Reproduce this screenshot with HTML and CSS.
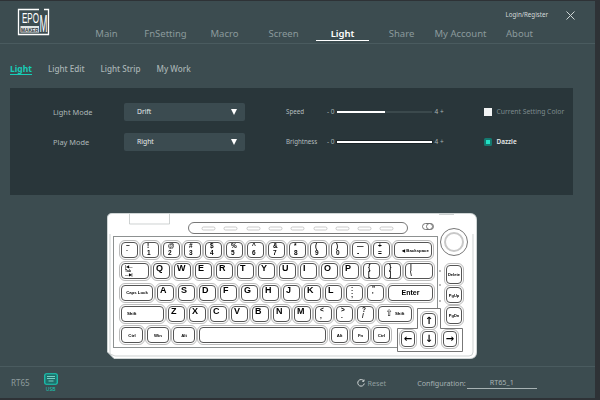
FILE: index.html
```html
<!DOCTYPE html>
<html lang="en">
<head>
<meta charset="utf-8">
<title>Epomaker RT65</title>
<link rel="stylesheet" href="styles.css">
</head>
<body>
<div class="app">
  <header class="header">
    <svg class="logo" width="33" height="28" viewBox="0 0 33 28">
      <path class="logo-frame" d="M22 1.500H1.500V26.500H31.500V1.500H27"/>
      <text class="logo-epo" transform="translate(5 15) scale(1 1.700)" textLength="17" lengthAdjust="spacingAndGlyphs">EPO</text>
      <rect class="logo-bar" x="3.500" y="18" width="18.500" height="6.500"/>
      <text class="logo-maker" x="4" y="23.500" textLength="17.500" lengthAdjust="spacingAndGlyphs">MAKER</text>
      <text class="logo-m" transform="translate(22.500 24) scale(1 2.400)" textLength="8" lengthAdjust="spacingAndGlyphs">M</text>
    </svg>
    <nav class="tabs">
      <a class="tab">Main</a>
      <a class="tab">FnSetting</a>
      <a class="tab">Macro</a>
      <a class="tab">Screen</a>
      <a class="tab active">Light</a>
      <a class="tab">Share</a>
      <a class="tab">My Account</a>
      <a class="tab">About</a>
    </nav>
    <div class="account">
      <span class="login">Login/Register</span>
      <svg class="close" width="9" height="9" viewBox="0 0 9 9"><path d="M.5.5l8 8M8.500.5l-8 8"/></svg>
    </div>
  </header>

  <nav class="subtabs">
    <a class="subtab active">Light</a>
    <a class="subtab">Light Edit</a>
    <a class="subtab">Light Strip</a>
    <a class="subtab">My Work</a>
  </nav>

  <section class="panel">
    <span class="label">Light Mode</span>
    <div class="select"><span>Drift</span><i class="caret"></i></div>
    <span class="label small">Speed</span>
    <div class="slider-wrap"><span>- 0</span><div class="slider half"><i></i></div><span>4 +</span></div>
    <label class="check"><i class="box"></i>Current Setting Color</label>

    <span class="label">Play Mode</span>
    <div class="select"><span>Right</span><i class="caret"></i></div>
    <span class="label small">Brightness</span>
    <div class="slider-wrap"><span>- 0</span><div class="slider full"><i></i></div><span>4 +</span></div>
    <label class="check on"><i class="box"></i>Dazzle</label>
  </section>

  <section class="keyboard">
    <svg class="chassis" width="370" height="146" viewBox="0 0 370 146">
      <path class="body" d="M5 .5H363Q369.500 .5 369.500 7V139Q369.500 145.500 363 145.500H7L.5 139V5Q.5 .5 5 .5Z"/>
      <path class="fine" d="M3 21V141L8 143H362Q366 143 366 139V21M22.500 1V11H62.500V1M332 1.500H347"/>
      <rect class="plate" x="6.500" y="23.500" width="324" height="111"/>
      <rect class="strip" x="81.500" y="9.500" width="219" height="11" rx="5.500"/>
      <g class="pills">
        <rect x="95" y="14" width="13" height="3" rx="1.500"/><rect x="117" y="14" width="13" height="3" rx="1.500"/>
        <rect x="140" y="14" width="13" height="3" rx="1.500"/><rect x="162" y="14" width="13" height="3" rx="1.500"/>
        <rect x="184" y="14" width="13" height="3" rx="1.500"/><rect x="207" y="14" width="13" height="3" rx="1.500"/>
        <rect x="229" y="14" width="13" height="3" rx="1.500"/><rect x="251" y="14" width="13" height="3" rx="1.500"/>
        <rect x="273" y="14" width="13" height="3" rx="1.500"/>
      </g>
      <rect class="toggle" x="315.500" y="10.500" width="11" height="6" rx="3"/>
      <circle class="toggle" cx="322.500" cy="13.500" r="3"/>
      <circle class="ring" cx="347" cy="29" r="13.500"/>
      <circle class="ring dim" cx="347" cy="29" r="9"/>
      <path class="cluster" d="M310.500 95.500H333.500V115.500H355.500V138.500H290.500V115.500H310.500Z"/>
      <g class="dots">
        <circle cx="333" cy="58" r=".8"/><circle cx="333" cy="72" r=".8"/><circle cx="333" cy="88" r=".8"/>
      </g>
    </svg>

    <div class="keys">
      <div class="row">
        <div class="key sym"><b>~</b><b>`</b></div><div class="key sym"><b>!</b><b>1</b></div>
        <div class="key sym"><b>@</b><b>2</b></div><div class="key sym"><b>#</b><b>3</b></div>
        <div class="key sym"><b>$</b><b>4</b></div><div class="key sym"><b>%</b><b>5</b></div>
        <div class="key sym"><b>^</b><b>6</b></div><div class="key sym"><b>&amp;</b><b>7</b></div>
        <div class="key sym"><b>*</b><b>8</b></div><div class="key sym"><b>(</b><b>9</b></div>
        <div class="key sym"><b>)</b><b>0</b></div><div class="key sym"><b>—</b><b>-</b></div>
        <div class="key sym"><b>+</b><b>=</b></div>
        <div class="key name w-back">◀ Backspace</div>
      </div>
      <div class="row">
        <div class="key w-tab tabkey"><span>|◀—</span><span>Tab</span><span>—▶|</span></div>
        <div class="key let">Q</div><div class="key let">W</div><div class="key let">E</div>
        <div class="key let">R</div><div class="key let">T</div><div class="key let">Y</div>
        <div class="key let">U</div><div class="key let">I</div><div class="key let">O</div>
        <div class="key let">P</div><div class="key sym"><b>{</b><b>[</b></div><div class="key sym"><b>}</b><b>]</b></div>
        <div class="key sym w-pipe"><b>|</b><b>\</b></div>
      </div>
      <div class="row">
        <div class="key name w-caps">Caps Lock</div>
        <div class="key let">A</div><div class="key let">S</div><div class="key let">D</div>
        <div class="key let">F</div><div class="key let">G</div><div class="key let">H</div>
        <div class="key let">J</div><div class="key let">K</div><div class="key let">L</div>
        <div class="key sym"><b>:</b><b>;</b></div><div class="key sym"><b>"</b><b>'</b></div>
        <div class="key name big w-enter">Enter</div>
      </div>
      <div class="row">
        <div class="key name left w-lshift">Shift</div>
        <div class="key let">Z</div><div class="key let">X</div><div class="key let">C</div>
        <div class="key let">V</div><div class="key let">B</div><div class="key let">N</div>
        <div class="key let">M</div><div class="key sym"><b>&lt;</b><b>,</b></div>
        <div class="key sym"><b>&gt;</b><b>.</b></div><div class="key sym"><b>?</b><b>/</b></div>
        <div class="key name w-rshift"><span class="shift-arrow">⇧</span>Shift</div>
      </div>
      <div class="row">
        <div class="key name w-mod">Ctrl</div><div class="key name w-mod">Win</div><div class="key name w-mod">Alt</div>
        <div class="key w-space"></div>
        <div class="key name push">Alt</div><div class="key name">Fn</div><div class="key name">Ctrl</div>
      </div>
    </div>

    <div class="key name nav nav-del">Delete</div>
    <div class="key name nav nav-up">PgUp</div>
    <div class="key name nav nav-dn">PgDn</div>
    <div class="key arrow a-up">↑</div>
    <div class="key arrow a-left">←</div>
    <div class="key arrow a-down">↓</div>
    <div class="key arrow a-right">→</div>
  </section>

  <footer class="footer">
    <span class="model">RT65</span>
    <div class="usb">
      <svg width="14" height="12" viewBox="0 0 14 12">
        <rect class="usb-frame" x=".75" y=".75" width="12.500" height="10.500" rx="1.500"/>
        <path class="usb-keys" d="M3 3.500h8M3 5.500h8M4.500 8h5"/>
      </svg>
      <span>USB</span>
    </div>
    <div class="reset">
      <svg width="8" height="8" viewBox="0 0 8 8"><path d="M6.800 2A3.300 3.300 0 1 0 7.300 4.500M7 .5V2.300H5.200"/></svg>
      <span>Reset</span>
    </div>
    <div class="config">
      <span>Configuration:</span>
      <span class="config-name">RT65_1</span>
    </div>
  </footer>
</div>
</body>
</html>
```
FILE: styles.css
```css
* { box-sizing: border-box; }
html, body { margin: 0; height: 100%; }
body {
  width: 600px;
  height: 400px;
  overflow: hidden;
  background: #2e3236;
  font-family: "Noto Sans", "Open Sans", sans-serif;
  color: #9aa6a8;
}
.app {
  width: 595px;
  height: 397px;
  margin-top: 1px;
  background: #3c4c50;
  display: flex;
  flex-direction: column;
}

/* header */
.header {
  height: 43px;
  flex: none;
  border-bottom: 1px solid #4a5b5f;
  position: relative;
  display: flex;
  padding-left: 17px;
}
.logo { margin-top: 7px; flex: none; }
.logo-frame { fill: none; stroke: #fff; stroke-width: 1.300; }
.logo-epo { font: 400 8.500px "Liberation Sans", sans-serif; fill: #fff; }
.logo-bar { fill: #dfe4e4; }
.logo-maker { font: 700 5.500px "Liberation Sans", sans-serif; fill: #2a3336; }
.logo-m { font: 400 10px "Liberation Sans", sans-serif; fill: #fff; }
.tabs {
  position: absolute;
  left: 77px;
  top: 23px;
  display: grid;
  grid-template-columns: repeat(8, 59px);
  justify-items: center;
}
.tab {
  width: 53px;
  height: 17px;
  font-size: 9.500px;
  line-height: 19px;
  text-align: center;
  white-space: nowrap;
  color: #8b9a9c;
}
.tab.active {
  color: #fff;
  font-weight: 600;
  border-bottom: 1.500px solid #fff;
}
.account {
  position: absolute;
  right: 20px;
  top: 9px;
  display: flex;
  align-items: center;
  gap: 18px;
}
.login { font-size: 6.200px; line-height: 10px; color: #d5dbdb; }
.close path { fill: none; stroke: #cfd6d6; stroke-width: 1; }

/* sub tabs */
.subtabs {
  height: 44px;
  flex: none;
  padding: 19px 0 0 10px;
  display: flex;
  align-items: flex-start;
  gap: 16px;
}
.subtab {
  font-size: 8.100px;
  font-weight: 500;
  line-height: 11px;
  color: #a9b4b5;
  white-space: nowrap;
}
.subtab.active {
  color: #17cdb8;
  font-size: 8.500px;
  font-weight: 700;
  border-bottom: 1px solid #17cdb8;
}

/* panel */
.panel {
  flex: none;
  margin-left: 10px;
  width: 563px;
  height: 107px;
  background: #29363a;
  padding: 15px 0 0 43px;
  display: grid;
  grid-template-columns: 71px 162px 41px 157px auto;
  grid-auto-rows: 17.500px;
  row-gap: 12.500px;
  align-items: center;
}
.label { font-size: 7.400px; color: #aeb8b9; }
.label.small { font-size: 6.200px; color: #b4bebf; }
.select {
  width: 121px;
  height: 17.500px;
  background: #3b4b50;
  border-radius: 2px;
  padding: 0 8px 0 13px;
  display: flex;
  align-items: center;
  justify-content: space-between;
  font-size: 6.800px;
  color: #e6ebeb;
}
.caret {
  width: 0;
  height: 0;
  border-left: 3px solid transparent;
  border-right: 3px solid transparent;
  border-top: 6px solid #fff;
}
.slider-wrap {
  display: flex;
  align-items: center;
  gap: 2.500px;
  width: 116px;
  font-size: 6.500px;
  color: #a7b2b3;
  white-space: nowrap;
}
.slider {
  width: 95px;
  height: 2px;
  flex: none;
  background: #3b494c;
}
.slider i { display: block; height: 100%; background: #fff; }
.slider.half i { width: 50%; }
.slider.full i { width: 100%; }
.slider.full { box-shadow: 0 0 0 1px #1b2427; }
.check {
  display: flex;
  align-items: center;
  gap: 4.500px;
  font-size: 6.800px;
  color: #7e8c8e;
  white-space: nowrap;
}
.box { width: 8px; height: 8px; background: #f2f4f4; flex: none; }
.check.on { color: #e6ebeb; font-weight: 600; font-size: 6.400px; }
.check.on .box {
  background: #22e0c4;
  border: 2px solid #14796f;
  border-radius: 1.500px;
}

/* keyboard */
.keyboard {
  position: relative;
  flex: none;
  width: 370px;
  height: 146px;
  margin: 18px 0 7px 107px;
  will-change: transform;
}
.chassis { position: absolute; left: 0; top: 0; }
.body { fill: #fff; stroke: #cfd5d5; }
.fine { fill: none; stroke: #b9bfbf; stroke-width: .7; }
.plate { fill: #fff; stroke: #8d9191; }
.strip { fill: #fff; stroke: #777; }
.pills rect { fill: #fff; stroke: #aaa; stroke-width: .6; }
.toggle { fill: #fff; stroke: #555; stroke-width: .8; }
.ring { fill: #fff; stroke: #777; stroke-width: 1; }
.ring.dim { stroke: #c8c8c8; stroke-width: 2; }
.cluster { fill: #fff; stroke: #777; }
.dots circle { fill: #666; }
.keys {
  position: relative;
  padding: 29px 0 0 14px;
  display: flex;
  flex-direction: column;
  gap: 5.300px;
}
.row { display: flex; gap: 4px; height: 16px; }
.key {
  flex: none;
  width: 17px;
  height: 16px;
  background: #fff;
  border: 1px solid #555;
  border-radius: 4px;
  outline: 1px solid #bbb;
  outline-offset: 1px;
  color: #000;
  font-family: "Liberation Sans", sans-serif;
  font-weight: 700;
  overflow: hidden;
}
.let { font-size: 9px; line-height: 9px; padding-left: 2px; }
.sym {
  font-size: 6.500px;
  line-height: 6.500px;
  padding-left: 4px;
  display: flex;
  flex-direction: column;
}
.name {
  font-size: 4.300px;
  display: flex;
  align-items: center;
  justify-content: center;
  white-space: nowrap;
}
.big { font-size: 7px; }
.left { justify-content: flex-start; padding-left: 5px; }
.w-back { width: 38px; padding-left: 5px; }
.w-tab { width: 28px; }
.tabkey {
  display: flex;
  flex-direction: column;
  justify-content: center;
  padding-left: 3px;
  font-size: 3.500px;
  line-height: 4.300px;
  white-space: nowrap;
}
.w-pipe { width: 28px; }
.w-caps { width: 32px; }
.w-enter { width: 45px; }
.w-lshift { width: 43px; }
.w-rshift { width: 34px; gap: 2px; }
.shift-arrow { font-size: 9px; line-height: 9px; font-family: "DejaVu Sans", sans-serif; font-weight: 400; }
.w-mod { width: 22px; }
.w-space { width: 127px; }
.push { margin-left: 1px; }
.nav { position: absolute; left: 339px; width: 16px; font-size: 4px; }
.nav-del { top: 52px; height: 19px; }
.nav-up { top: 74px; height: 16px; }
.nav-dn { top: 94px; height: 17px; }
.arrow {
  position: absolute;
  font-family: "DejaVu Sans", sans-serif;
  font-size: 10px;
  line-height: 14px;
  text-align: center;
  width: 14px;
  height: 15px;
}
.a-up { left: 315px; top: 100px; }
.a-left { left: 294px; top: 118px; height: 16px; }
.a-down { left: 315px; top: 118px; height: 16px; }
.a-right { left: 336px; top: 118px; height: 16px; }

/* footer */
.footer {
  flex: 1;
  border-top: 1px solid #4a5b5f;
  position: relative;
  display: flex;
  align-items: center;
}
.model { margin-left: 11px; font-size: 8px; color: #8f9c9e; }
.usb {
  margin-left: 14px;
  display: flex;
  flex-direction: column;
  align-items: center;
  color: #17cdb8;
  font-size: 5px;
  line-height: 6px;
}
.usb svg { display: block; margin-bottom: 1px; }
.usb-frame { fill: #1f6f6a; stroke: #17cdb8; stroke-width: 1.200; }
.usb-keys { fill: none; stroke: #8fe8dc; stroke-width: .8; }
.reset {
  margin-left: 299px;
  display: flex;
  align-items: center;
  gap: 3px;
  font-size: 7.200px;
  color: #8f9c9e;
}
.reset svg path { fill: none; stroke: #d0d6d6; stroke-width: 1; }
.config {
  margin-left: 31px;
  display: flex;
  align-items: center;
  font-size: 7.200px;
  color: #a7b2b3;
}
.config-name {
  width: 70px;
  margin-left: 1px;
  text-align: center;
  border-bottom: 1px solid #a7b2b3;
  line-height: 11px;
}
```
